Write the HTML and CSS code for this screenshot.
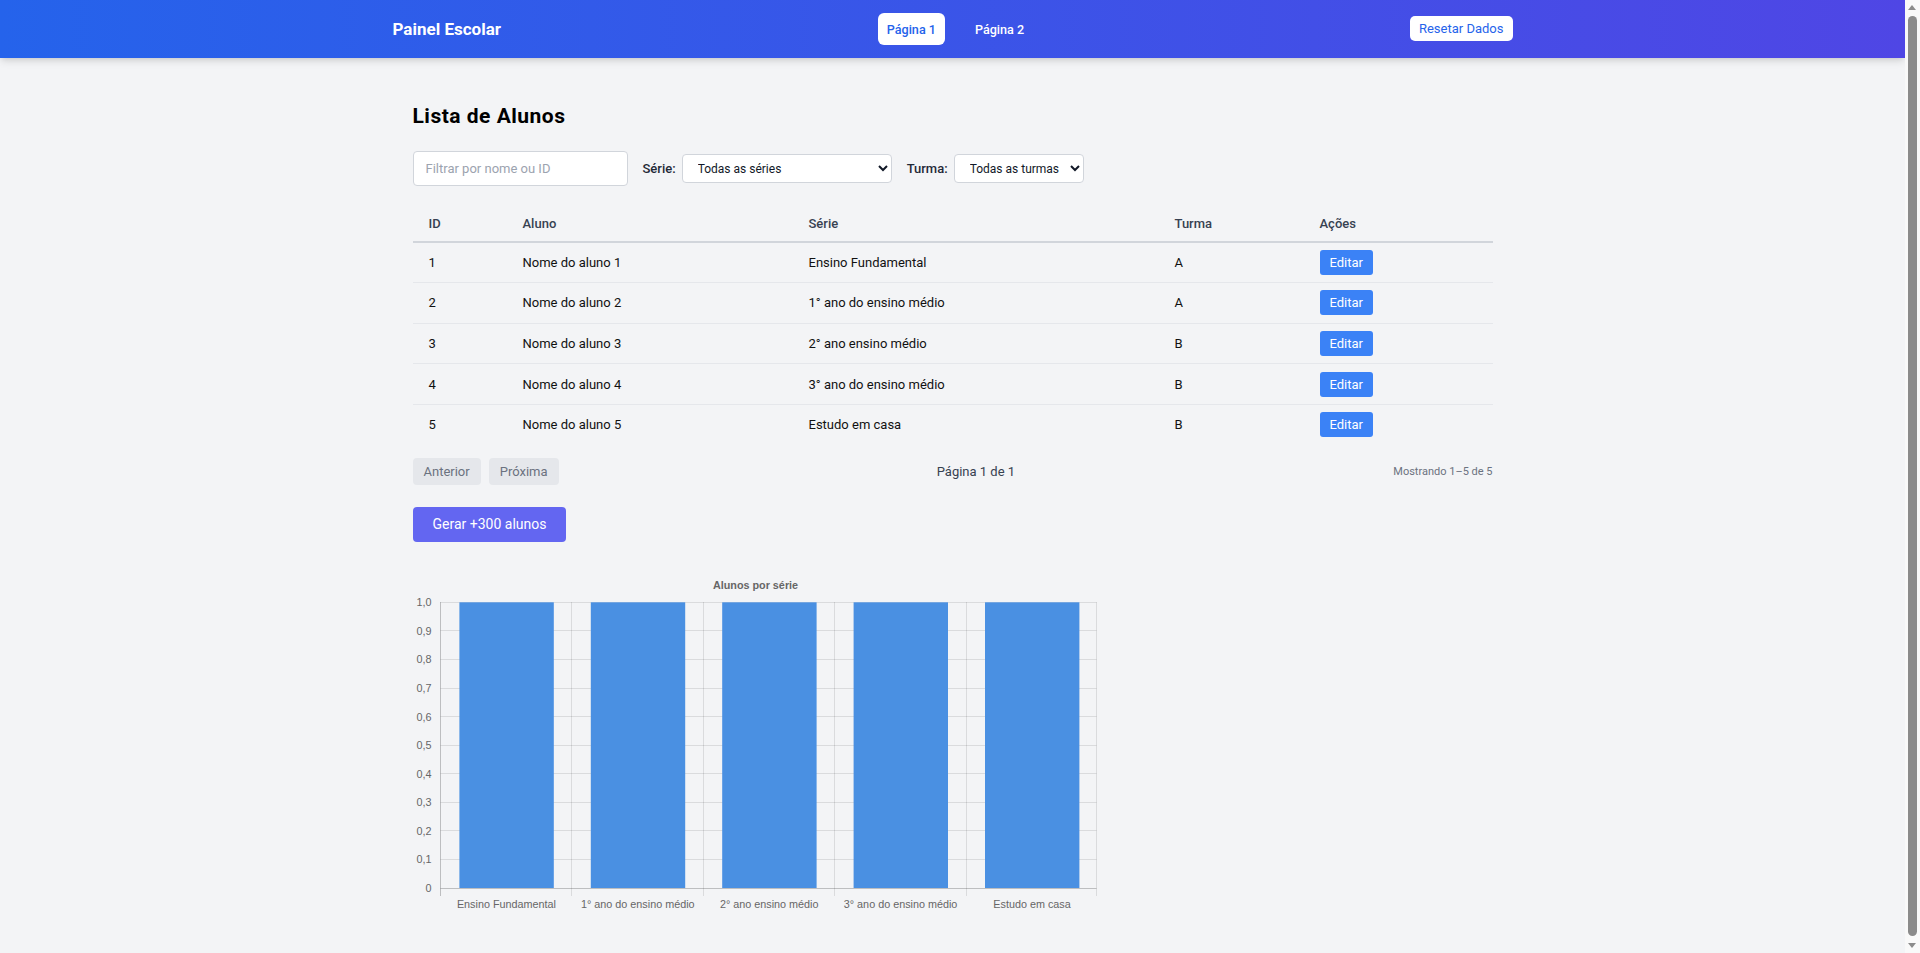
FILE: index.html
```html
<!DOCTYPE html>
<html lang="pt-BR">
<head>
<meta charset="utf-8">
<title>Painel Escolar</title>
<link rel="stylesheet" href="styles.css">
</head>
<body>
<header class="topbar">
  <div class="topbar-inner">
    <div class="brand">Painel Escolar</div>
    <nav class="nav">
      <a class="nav-link active">Página 1</a>
      <a class="nav-link">Página 2</a>
    </nav>
    <button class="btn-reset">Resetar Dados</button>
  </div>
</header>

<main class="main">
  <h1 class="page-title">Lista de Alunos</h1>

  <div class="filters">
    <input class="search" type="text" placeholder="Filtrar por nome ou ID">
    <label class="filter-label">Série:</label>
    <select class="select select-serie">
      <option>Todas as séries</option>
    </select>
    <label class="filter-label">Turma:</label>
    <select class="select select-turma">
      <option>Todas as turmas</option>
    </select>
  </div>

  <table class="students">
    <colgroup>
      <col class="c-id"><col class="c-aluno"><col class="c-serie"><col class="c-turma"><col class="c-acoes">
    </colgroup>
    <thead>
      <tr><th>ID</th><th>Aluno</th><th>Série</th><th>Turma</th><th>Ações</th></tr>
    </thead>
    <tbody>
      <tr><td>1</td><td>Nome do aluno 1</td><td>Ensino Fundamental</td><td>A</td><td><button class="btn-edit">Editar</button></td></tr>
      <tr><td>2</td><td>Nome do aluno 2</td><td>1° ano do ensino médio</td><td>A</td><td><button class="btn-edit">Editar</button></td></tr>
      <tr><td>3</td><td>Nome do aluno 3</td><td>2° ano ensino médio</td><td>B</td><td><button class="btn-edit">Editar</button></td></tr>
      <tr><td>4</td><td>Nome do aluno 4</td><td>3° ano do ensino médio</td><td>B</td><td><button class="btn-edit">Editar</button></td></tr>
      <tr><td>5</td><td>Nome do aluno 5</td><td>Estudo em casa</td><td>B</td><td><button class="btn-edit">Editar</button></td></tr>
    </tbody>
  </table>

  <div class="pagination">
    <div class="pager-buttons">
      <button class="btn-page" disabled>Anterior</button>
      <button class="btn-page" disabled>Próxima</button>
    </div>
    <div class="page-info">Página 1 de 1</div>
    <div class="count-info">Mostrando 1–5 de 5</div>
  </div>

  <button class="btn-generate">Gerar +300 alunos</button>

  <div class="chart">
    <svg class="chart-svg" width="688" height="350" viewBox="0 0 688 350" xmlns="http://www.w3.org/2000/svg">
      <text class="chart-title" x="342.5" y="19.9" text-anchor="middle">Alunos por série</text>
      <g class="grid">
        <line x1="27.5" y1="33.5" x2="683.5" y2="33.5"/>
        <line x1="27.5" y1="61.5" x2="683.5" y2="61.5"/>
        <line x1="27.5" y1="90.5" x2="683.5" y2="90.5"/>
        <line x1="27.5" y1="119.5" x2="683.5" y2="119.5"/>
        <line x1="27.5" y1="147.5" x2="683.5" y2="147.5"/>
        <line x1="27.5" y1="176.5" x2="683.5" y2="176.5"/>
        <line x1="27.5" y1="204.5" x2="683.5" y2="204.5"/>
        <line x1="27.5" y1="233.5" x2="683.5" y2="233.5"/>
        <line x1="27.5" y1="261.5" x2="683.5" y2="261.5"/>
        <line x1="27.5" y1="290.5" x2="683.5" y2="290.5"/>
        <line x1="158.5" y1="33" x2="158.5" y2="327"/>
        <line x1="290.5" y1="33" x2="290.5" y2="327"/>
        <line x1="421.5" y1="33" x2="421.5" y2="327"/>
        <line x1="553.5" y1="33" x2="553.5" y2="327"/>
        <line x1="683.5" y1="33" x2="683.5" y2="327"/>
      </g>
      <g class="bars">
        <rect x="46.4" y="33.3" width="94.4" height="285.7"/>
        <rect x="177.8" y="33.3" width="94.4" height="285.7"/>
        <rect x="309.2" y="33.3" width="94.4" height="285.7"/>
        <rect x="440.6" y="33.3" width="94.4" height="285.7"/>
        <rect x="572.0" y="33.3" width="94.4" height="285.7"/>
      </g>
      <g class="axis">
        <line x1="27.5" y1="33" x2="27.5" y2="327"/>
        <line x1="27.5" y1="319.5" x2="683.5" y2="319.5"/>
      </g>
      <g class="ylabels">
        <text x="18.5" y="37.2" text-anchor="end">1,0</text>
        <text x="18.5" y="65.8" text-anchor="end">0,9</text>
        <text x="18.5" y="94.4" text-anchor="end">0,8</text>
        <text x="18.5" y="122.9" text-anchor="end">0,7</text>
        <text x="18.5" y="151.5" text-anchor="end">0,6</text>
        <text x="18.5" y="180.1" text-anchor="end">0,5</text>
        <text x="18.5" y="208.6" text-anchor="end">0,4</text>
        <text x="18.5" y="237.2" text-anchor="end">0,3</text>
        <text x="18.5" y="265.8" text-anchor="end">0,2</text>
        <text x="18.5" y="294.3" text-anchor="end">0,1</text>
        <text x="18.5" y="322.9" text-anchor="end">0</text>
      </g>
      <g class="xlabels">
        <text x="93.4" y="339.2" text-anchor="middle">Ensino Fundamental</text>
        <text x="224.8" y="339.2" text-anchor="middle">1° ano do ensino médio</text>
        <text x="356.2" y="339.2" text-anchor="middle">2° ano ensino médio</text>
        <text x="487.6" y="339.2" text-anchor="middle">3° ano do ensino médio</text>
        <text x="619.0" y="339.2" text-anchor="middle">Estudo em casa</text>
      </g>
    </svg>
  </div>
</main>

<div class="scrollbar" aria-hidden="true">
  <span class="sb-arrow sb-up"></span>
  <span class="sb-thumb"></span>
  <span class="sb-arrow sb-down"></span>
</div>
</body>
</html>
```

FILE: styles.css
```css
* {
  box-sizing: border-box;
}

html, body {
  margin: 0;
  padding: 0;
}

body {
  background: #f3f4f6;
  font-family: Roboto, "Noto Sans", "Liberation Sans", sans-serif;
  color: #111827;
  font-size: 13px;
  padding-right: 15px;
}

/* Browser scrollbar look-alike */
.scrollbar {
  position: fixed;
  top: 0;
  right: 0;
  width: 15px;
  height: 100vh;
  background: #f9f9f9;
  z-index: 10;
}

.sb-thumb {
  position: absolute;
  top: 16px;
  bottom: 17px;
  left: 3px;
  right: 3px;
  background: #8b8b8b;
  border-radius: 5px;
}

.sb-arrow {
  position: absolute;
  left: 3px;
  width: 0;
  height: 0;
  border-left: 4.5px solid transparent;
  border-right: 4.5px solid transparent;
}

.sb-up {
  top: 5px;
  border-bottom: 5px solid #8b8b8b;
}

.sb-down {
  bottom: 5px;
  border-top: 5px solid #8b8b8b;
}

/* Header */
.topbar {
  height: 58px;
  background: linear-gradient(to right, #2563eb, #4f46e5);
  box-shadow: 0 4px 8px -1px rgba(0, 0, 0, 0.12), 0 2px 5px -2px rgba(0, 0, 0, 0.1);
  position: relative;
  z-index: 1;
}

.topbar-inner {
  max-width: 1152px;
  height: 100%;
  margin: 0 auto;
  padding: 0 16px;
  display: flex;
  align-items: center;
  justify-content: space-between;
}

.brand {
  color: #fff;
  font-size: 17px;
  font-weight: 700;
  line-height: 20px;
}

.nav {
  display: flex;
  align-items: center;
  gap: 21px;
}

.nav-link {
  display: inline-flex;
  align-items: center;
  height: 32px;
  padding: 0 9px;
  border-radius: 6px;
  color: #fff;
  font-size: 12.6px;
  font-weight: 500;
  cursor: pointer;
}

.nav-link.active {
  background: #fff;
  color: #2563eb;
}

.btn-reset {
  height: 25px;
  padding: 0 9px;
  border: none;
  border-radius: 5px;
  background: #fff;
  color: #2563eb;
  font-family: inherit;
  font-size: 13px;
  margin-top: -1px;
}

/* Main */
.main {
  max-width: 1080px;
  margin: 0 auto;
  padding: 44px 0 52px;
}

.page-title {
  margin: 0;
  font-size: 21px;
  line-height: 28px;
  font-weight: 700;
  letter-spacing: 0.5px;
  color: #000;
}

.filters {
  margin-top: 21px;
  display: flex;
  align-items: center;
}

.search {
  width: 215px;
  height: 35px;
  padding: 0 12px;
  border: 1px solid #d1d5db;
  border-radius: 4px;
  background: #fff;
  font-family: inherit;
  font-size: 13px;
  color: #111827;
  margin-right: 15px;
}

.search::placeholder {
  color: #9ca3af;
}

.filter-label {
  font-size: 13px;
  font-weight: 500;
  color: #1f2937;
  margin-right: 6px;
}

.select {
  height: 29px;
  padding: 0 4px 0 11px;
  border: 1px solid #d1d5db;
  border-radius: 4px;
  background: #fff;
  font-family: inherit;
  font-size: 12px;
  color: #111827;
}

.select-serie {
  width: 210px;
  margin-right: 15px;
}

.select-turma {
  width: 130px;
}

/* Table */
.students {
  width: 100%;
  margin-top: 20px;
  border-collapse: collapse;
  table-layout: fixed;
}

.c-id { width: 94px; }
.c-aluno { width: 286px; }
.c-serie { width: 366px; }
.c-turma { width: 145px; }
.c-acoes { width: 189px; }

.students th {
  text-align: left;
  font-weight: 500;
  color: #374151;
  font-size: 13px;
  height: 36px;
  padding: 0 16px;
  border-bottom: 2px solid #d1d5db;
}

.students td {
  height: 40.6px;
  padding: 0 16px;
  font-size: 13px;
  color: #111;
  border-bottom: 1px solid #e5e7eb;
}

.students tbody tr:last-child td {
  border-bottom: none;
}

.btn-edit {
  height: 25px;
  padding: 0 10px;
  border: none;
  border-radius: 3px;
  background: #3b82f6;
  color: #fff;
  font-family: inherit;
  font-size: 13px;
  vertical-align: middle;
}

/* Pagination */
.pagination {
  margin-top: 13px;
  display: flex;
  align-items: center;
  justify-content: space-between;
}

.pager-buttons {
  display: flex;
  gap: 8px;
}

.btn-page {
  height: 27px;
  padding: 0 11px;
  border: none;
  border-radius: 4px;
  background: #e5e7eb;
  color: #6b7280;
  font-family: inherit;
  font-size: 13px;
}

.page-info {
  font-size: 13px;
  color: #374151;
}

.count-info {
  font-size: 11px;
  color: #6b7280;
}

.btn-generate {
  display: block;
  margin-top: 22px;
  height: 35px;
  padding: 0 20px;
  border: none;
  border-radius: 4px;
  background: #6366f1;
  color: #fff;
  font-family: inherit;
  font-size: 14px;
}

/* Chart */
.chart {
  margin-top: 27px;
  width: 688px;
  height: 350px;
}

.chart-svg {
  display: block;
  font-family: "Liberation Sans", Arial, Helvetica, sans-serif;
}

.chart-title {
  font-size: 10.8px;
  font-weight: 700;
  fill: #666;
}

.grid line {
  stroke: rgba(0, 0, 0, 0.1);
  stroke-width: 1;
}

.axis line {
  stroke: rgba(0, 0, 0, 0.22);
  stroke-width: 1;
}

.bars rect {
  fill: #4a90e2;
}

.ylabels text,
.xlabels text {
  font-size: 10.8px;
  fill: #666;
}
```
